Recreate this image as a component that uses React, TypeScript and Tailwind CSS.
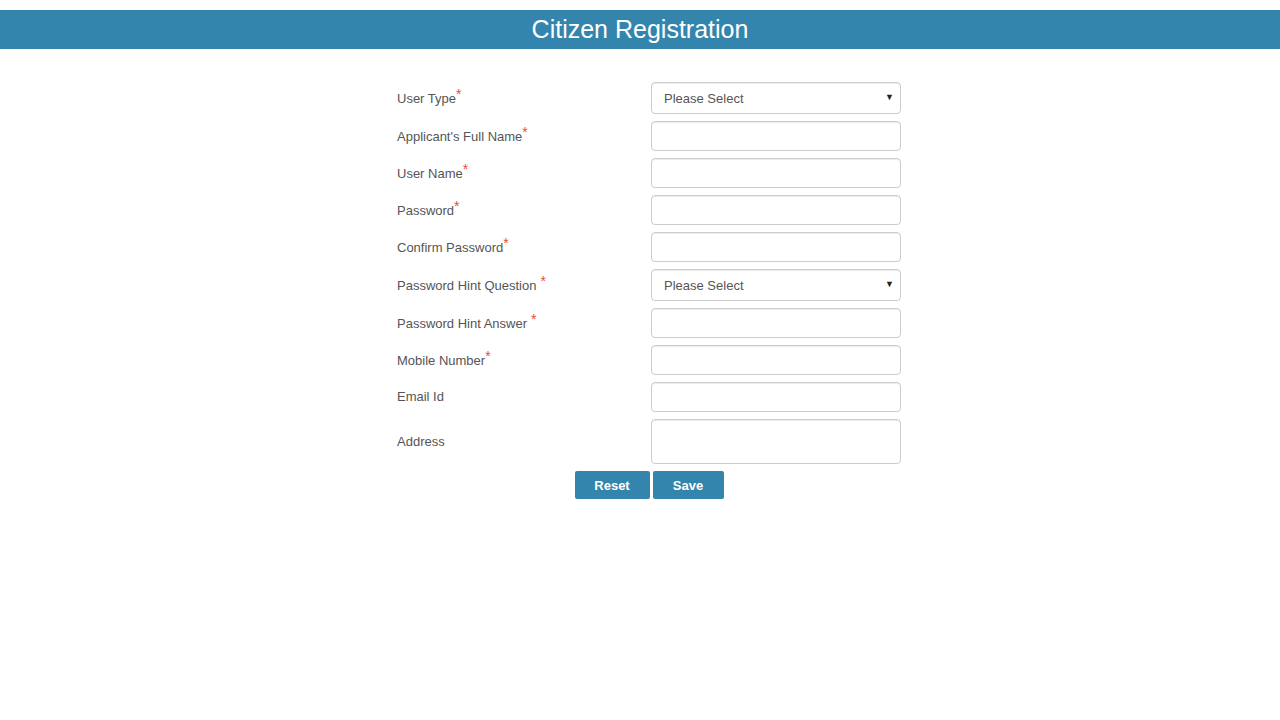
import React from "react";

type Field = {
  label: string;
  required?: boolean;
  spaced?: boolean;
  kind: "select" | "input" | "textarea";
};

const fields: Field[] = [
  { label: "User Type", required: true, kind: "select" },
  { label: "Applicant's Full Name", required: true, kind: "input" },
  { label: "User Name", required: true, kind: "input" },
  { label: "Password", required: true, kind: "input" },
  { label: "Confirm Password", required: true, kind: "input" },
  { label: "Password Hint Question", required: true, spaced: true, kind: "select" },
  { label: "Password Hint Answer", required: true, spaced: true, kind: "input" },
  { label: "Mobile Number", required: true, kind: "input" },
  { label: "Email Id", kind: "input" },
  { label: "Address", kind: "textarea" },
];

const boxCls =
  "w-[250px] rounded-[4px] border border-[#cccccc] bg-white shadow-[inset_0_1px_1px_rgba(0,0,0,0.075)] outline-none";

function Control({ kind }: { kind: Field["kind"] }) {
  if (kind === "select") {
    return (
      <div className="relative">
        <select className={`${boxCls} h-[32px] appearance-none pl-[12px] pt-[1px] text-[13px] text-[#555555]`}>
          <option>Please Select</option>
        </select>
        <span className="pointer-events-none absolute right-[7px] top-[9px] text-[9px] text-[#222222]">▼</span>
      </div>
    );
  }
  if (kind === "textarea") {
    return <textarea className={`${boxCls} block h-[45px] resize-none`} />;
  }
  return <input className={`${boxCls} block h-[30px]`} />;
}

export default function App() {
  return (
    <div className="min-h-[720px] bg-white pt-[10px] font-['Liberation_Sans',Arial,sans-serif]">
      <div className="flex h-[39px] items-center justify-center bg-[#3385ae]">
        <h1 className="text-[25px] leading-none text-white">Citizen Registration</h1>
      </div>

      <form className="mx-auto mt-[33px] w-[522px] pl-[18px]">
        <div className="grid grid-cols-[254px_250px] gap-y-[7px]">
          {fields.map((f) => (
            <React.Fragment key={f.label}>
              <label className="flex items-center text-[13px] text-[#555555]">
                <span>
                  {f.label}
                  {f.required && (
                    <span className={`relative -top-[4px] text-[14px] text-[#e74c3c] ${f.spaced ? "ml-[4px]" : ""}`}>*</span>
                  )}
                </span>
              </label>
              <Control kind={f.kind} />
            </React.Fragment>
          ))}
        </div>
        <div className="mt-[7px] flex justify-center gap-[3px]">
          <button type="reset" className="h-[28px] w-[75px] rounded-[2px] bg-[#3385ae] pt-[1px] text-[13px] font-bold text-white">
            Reset
          </button>
          <button type="button" className="h-[28px] w-[71px] rounded-[2px] bg-[#3385ae] pt-[1px] text-[13px] font-bold text-white">
            Save
          </button>
        </div>
      </form>
    </div>
  );
}
